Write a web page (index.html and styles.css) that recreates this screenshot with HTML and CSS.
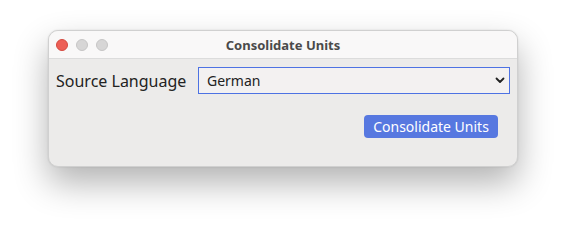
FILE: index.html
```html
<!DOCTYPE html>
<html>
<head>
<meta charset="utf-8">
<link rel="stylesheet" href="styles.css">
</head>
<body>
<div class="window">
  <div class="titlebar">
    <div class="lights">
      <span class="light red"></span>
      <span class="light grey"></span>
      <span class="light grey"></span>
    </div>
    <div class="title">Consolidate Units</div>
  </div>
  <div class="content">
    <div class="row">
      <label class="label">Source Language</label>
      <div class="select">
        <span class="value">German</span>
        <svg class="chev" width="10" height="7" viewBox="0 0 10 7"><path d="M1.5 1.5 L5 5 L8.5 1.5" fill="none" stroke="#222" stroke-width="1.8" stroke-linecap="round" stroke-linejoin="round"/></svg>
      </div>
    </div>
    <div class="actions">
      <button class="btn">Consolidate Units</button>
    </div>
  </div>
</div>
</body>
</html>
```
FILE: styles.css
```css
html, body {
  margin: 0;
  padding: 0;
  background: #ffffff;
  width: 566px;
  height: 235px;
  overflow: hidden;
  font-family: "Noto Sans", "Open Sans", sans-serif;
}
body {
  padding: 30px 0 0 48px;
  box-sizing: border-box;
}
.window {
  width: 470px;
  height: 137px;
  box-sizing: border-box;
  border-radius: 10px;
  background: #ecebea;
  border: 1px solid #d0d0d0;
  box-shadow: 0 16px 34px rgba(0,0,0,0.30), 0 0 2px rgba(0,0,0,0.12);
  overflow: hidden;
  display: flex;
  flex-direction: column;
}
.titlebar {
  height: 27px;
  flex: none;
  background: #f9f8f8;
  border-bottom: 1px solid #dcdcdc;
  display: flex;
  align-items: center;
  position: relative;
}
.lights {
  display: flex;
  gap: 8px;
  padding-left: 7px;
}
.light {
  width: 12px;
  height: 12px;
  border-radius: 50%;
  box-sizing: border-box;
}
.red { background: #ed5f56; border: 0.5px solid #d4493f; }
.grey { background: #d7d6d6; border: 0.5px solid #c6c5c5; }
.title {
  position: absolute;
  left: 0;
  right: 0;
  text-align: center;
  font-size: 13px;
  font-weight: 700;
  color: #4a4a4a;
  pointer-events: none;
}
.content {
  flex: 1;
  padding: 8px 7px 0 7px;
  display: flex;
  flex-direction: column;
}
.row {
  display: flex;
  align-items: center;
  gap: 11px;
}
.label {
  font-size: 16px;
  color: #222;
  width: 131px;
}
.select {
  width: 312px;
  height: 27px;
  box-sizing: border-box;
  border: 1px solid #4d72e3;
  background: #f3f1f1;
  display: flex;
  align-items: center;
  justify-content: space-between;
  padding: 0 4px 0 8px;
}
.value {
  font-size: 14px;
  color: #222;
}
.chev { display: block; }
.actions {
  display: flex;
  justify-content: flex-end;
  padding-right: 12px;
  margin-top: 21px;
}
.btn {
  font-family: "Noto Sans", "Open Sans", sans-serif;
  font-size: 14px;
  color: #ffffff;
  background: #5778e0;
  border: none;
  border-radius: 4px;
  height: 23px;
  width: 134px;
  padding: 0;
  line-height: 23px;
}
```
